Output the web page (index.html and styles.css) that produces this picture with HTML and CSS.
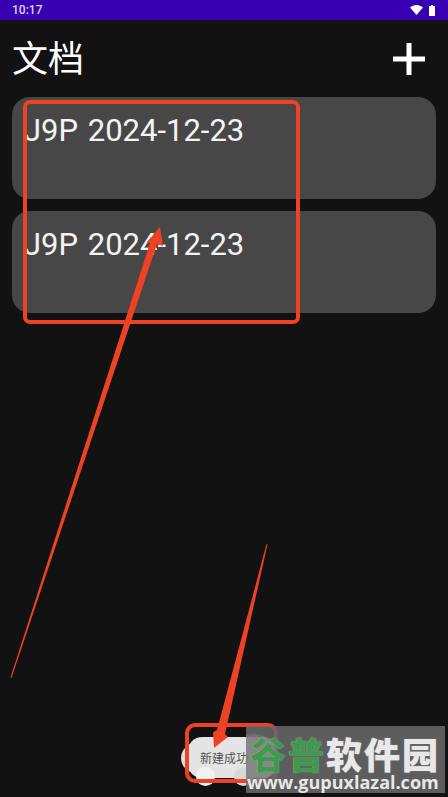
FILE: index.html
```html
<!DOCTYPE html>
<html lang="zh-CN">
<head>
  <meta charset="UTF-8">
  <meta name="viewport" content="width=device-width, initial-scale=1.0">
  <title>文档</title>
  <link rel="stylesheet" href="styles.css">
</head>
<body>
  <div class="status-bar">
    <span class="clock">10:17</span>
    <div class="status-icons">
      <svg class="wifi" width="13" height="10" viewBox="0 0 13 10"><path d="M0 2.6C1.8 1 4 0 6.500 0S11.200 1 13 2.600L6.500 10Z" fill="#fff"/></svg>
      <svg class="battery" width="6" height="11" viewBox="0 0 6 11"><path d="M2 0H4V1H6V11H0V1H2Z" fill="#fff"/></svg>
    </div>
  </div>

  <header class="top-bar">
    <h1 class="title">文档</h1>
    <svg class="add" width="32" height="32" viewBox="0 0 32 32"><path d="M13.500 0H18.500V13.500H32V18.500H18.500V32H13.500V18.500H0V13.500H13.500Z" fill="#fff"/></svg>
  </header>

  <main class="doc-list">
    <div class="doc-card">J9P 2024-12-23</div>
    <div class="doc-card">J9P 2024-12-23</div>
  </main>

  <!-- app toast and the circles peeking out behind it -->
  <div class="toast-back"></div>
  <div class="toast">新建成功</div>
  <div class="dot dot-left"></div>
  <div class="dot dot-right"></div>

  <!-- red annotations drawn over the screenshot -->
  <div class="mark mark-list"></div>
  <div class="mark mark-toast"></div>
  <svg class="arrows" width="448" height="797" viewBox="0 0 448 797">
    <path d="M10.500 677.500L150 243 147 242 160 227 163 246 157 244 11.500 678Z" fill="#ef4123"/>
    <path d="M266.500 544L217 730 213 732 214 748 228 737 225 734 267.500 544.500Z" fill="#ef4123"/>
  </svg>

  <div class="watermark">
    <div class="wm-glow"></div>
    <div class="wm-name"><span class="wm-green">谷普</span>软件园</div>
    <div class="wm-url">www.gupuxlazal.com</div>
  </div>
</body>
</html>
```

FILE: styles.css
```css
html, body {
  margin: 0;
  height: 797px;
  overflow: hidden;
}
body {
  position: relative;
  background-color: #121212;
  color: #fff;
  font-family: Roboto, "Noto Sans CJK SC", sans-serif;
}
.status-bar {
  height: 20px;
  padding: 0 13px 0 12px;
  display: flex;
  align-items: center;
  justify-content: space-between;
  background-color: #3700b3;
}
.clock {
  font-size: 12px;
  font-weight: 500;
  color: #ddd5f2;
}
.status-icons {
  display: flex;
  align-items: center;
  gap: 6px;
}
.top-bar {
  height: 77px;
  padding: 0 23px 0 12px;
  display: flex;
  align-items: center;
  justify-content: space-between;
  box-sizing: border-box;
}
.title {
  margin: 0 0 6px;
  font-family: "Noto Sans CJK SC", sans-serif;
  font-size: 36px;
  font-weight: 400;
  line-height: 1;
}
.doc-list {
  padding: 0 12px;
  display: flex;
  flex-direction: column;
  gap: 12px;
}
.doc-card {
  height: 102px;
  padding: 13px 12px;
  box-sizing: border-box;
  background-color: #474747;
  border-radius: 18px;
  font-size: 31px;
  line-height: 42px;
  word-spacing: 2px;
  color: #f4f4f4;
}
.toast-back {
  position: absolute;
  left: 181px;
  top: 743px;
  width: 30px;
  height: 30px;
  border-radius: 50%;
  background-color: #dcdcdc;
}
.toast {
  position: absolute;
  left: 188px;
  top: 737px;
  width: 90px;
  height: 41px;
  padding-left: 12px;
  box-sizing: border-box;
  border-radius: 14px;
  background-color: #e4e4e4;
  color: #555;
  font-family: "Noto Sans CJK SC", sans-serif;
  font-size: 12px;
  line-height: 41px;
}
.dot {
  position: absolute;
  top: 767px;
  width: 19px;
  height: 19px;
  border-radius: 50%;
  background-color: #f2f2f2;
}
.dot-left {
  left: 196px;
}
.dot-right {
  left: 234px;
  background-color: #d8d8d8;
}
.mark {
  position: absolute;
  box-sizing: border-box;
  border: 4px solid #ef4123;
}
.mark-list {
  left: 23px;
  top: 100px;
  width: 277px;
  height: 224px;
  border-radius: 7px;
}
.mark-toast {
  left: 185px;
  top: 723px;
  width: 93px;
  height: 60px;
  border-radius: 10px;
}
.arrows {
  position: absolute;
  left: 0;
  top: 0;
}
.watermark {
  position: absolute;
  left: 246px;
  top: 726px;
  width: 199px;
  height: 67px;
  padding-top: 6px;
  box-sizing: border-box;
  overflow: hidden;
  background-color: rgba(104, 104, 104, 0.88);
  color: #e8e8e8;
  font-family: "Noto Sans CJK SC", sans-serif;
}
.wm-glow {
  position: absolute;
  left: -16px;
  top: 8px;
  width: 48px;
  height: 48px;
  border-radius: 50%;
  background-color: rgba(255, 255, 255, 0.12);
}
.wm-name {
  position: relative;
  padding-left: 4px;
  font-size: 36px;
  font-weight: 900;
  line-height: 42px;
  letter-spacing: 2px;
  white-space: nowrap;
  text-shadow: 0 0 1px #bbb;
}
.wm-green {
  color: #3f9a4e;
}
.wm-url {
  position: relative;
  padding-left: 1px;
  font-family: "Open Sans", sans-serif;
  font-size: 18px;
  font-weight: 700;
  line-height: 16px;
  white-space: nowrap;
}
```
